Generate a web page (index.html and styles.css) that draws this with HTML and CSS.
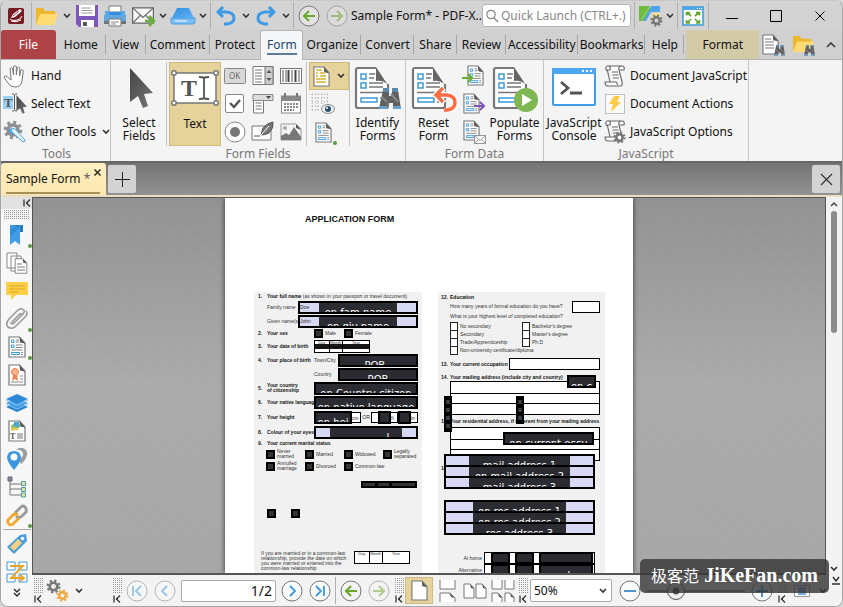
FILE: index.html
```html
<!DOCTYPE html>
<html lang="en">
<head>
<meta charset="utf-8">
<title>Sample Form* - PDF-XChange Editor</title>
<link rel="stylesheet" href="styles.css">
</head>
<body>
<svg class="defs" aria-hidden="true">
  <defs>
    <linearGradient id="gBlue" x1="0" y1="0" x2="1" y2="1"><stop offset="0" stop-color="#2e8ddd"/><stop offset="1" stop-color="#62b4fa"/></linearGradient>
    <linearGradient id="gArrow" x1="0" y1="0" x2="1" y2="1"><stop offset="0" stop-color="#444"/><stop offset="1" stop-color="#777"/></linearGradient>
    <symbol id="chev" viewBox="0 0 8 6"><path d="M1 1l3 3 3-3" fill="none" stroke="#333" stroke-width="1.6"/></symbol>
    <symbol id="dchev" viewBox="0 0 8 10"><path d="M1 1l3 3 3-3M1 5l3 3 3-3" fill="none" stroke="#333" stroke-width="1.5"/></symbol>
    <symbol id="first" viewBox="0 0 8 8"><path d="M1 0.500v7M7 0.500L3.500 4 7 7.500M3 4h2" fill="none" stroke="#333" stroke-width="1.300"/></symbol>
    <symbol id="doc" viewBox="0 0 18 22"><path d="M1 1h10.500l5.500 6v14H1z" fill="#fff" stroke="#777" stroke-width="1.200"/><path d="M11.500 1l5.500 6.500-5-1z" fill="#555"/></symbol>
    <symbol id="form" viewBox="0 0 18 22"><use href="#doc"/><path d="M3.500 4h2.500v2.500H3.500zM3.500 9h2.500v2.500H3.500zM3.500 16.500h8v2h-8z" fill="none" stroke="#3d9bdc"/><path d="M8 4h3M8 6h3M8 9h6.500M8 11.500h6.500M3.500 14h11M13 16.500h2M13 18.500h2" stroke="#777" stroke-width=".9"/></symbol>
    <symbol id="bigform" viewBox="0 0 36 44"><path d="M2 2h20l12 14v26H2z" fill="#fff"/><path d="M22 2H4Q2 2 2 4v36q0 2 2 2h28q2 0 2-2V18" fill="none" stroke="#777" stroke-width="2.200"/><path d="M22 1l12 18q-5-5-12-4z" fill="#666"/><path d="M7 8h5v5H7zM7 17h5v5H7zM7 32h16v4H7z" fill="#fff" stroke="#3d9bdc" stroke-width="1.500"/><path d="M15 8h6M15 12h5M15 17h14M15 21h14M6 26.500h23M26 32h4M26 36h4" stroke="#777" stroke-width="1.500"/></symbol>
    <symbol id="bino" viewBox="0 0 22 22"><path d="M4 2h6v6h3V2h6l3 19h-8v-6H8v6H0z" fill="#606060"/><path d="M4 0h6v4H4zM13 0h6v4h-6z" fill="#5b88aa"/><path d="M0 18h8v3H0zM14 18h8v3h-8z" fill="#66a0c9"/><path d="M3 9l5 5M12 6l7 8" stroke="#888" stroke-width="2"/></symbol>
    <symbol id="gear" viewBox="0 0 20 20"><circle cx="10" cy="10" r="7.800" fill="none" stroke="currentColor" stroke-width="3" stroke-dasharray="3.060 3.060"/><circle cx="10" cy="10" r="5" fill="none" stroke="currentColor" stroke-width="3.600"/></symbol>
    <symbol id="scroll" viewBox="0 0 22 22"><path d="M5 1h13q3 0 2 4h-5L18 17q1 4-2 4H4q-3 0-3-4h11q1 0 1.500 3M6 17L3.500 6Q1 5 2 2.500T5 1q2 1 1 4H3M15 5q-1-4 3-4M8 7h6M8.500 10h6M9 13h6" fill="#fafafa" stroke="#666" stroke-width="1.100"/></symbol>
    <symbol id="cursor" viewBox="0 0 24 40"><path d="M1 0L24 25l-9 1 4 12-5 2-5-12-8 6z" fill="url(#gArrow)"/></symbol>
    <symbol id="left" viewBox="0 0 22 22"><circle cx="11" cy="11" r="10" fill="#f4f4f4" fill-opacity=".5" stroke="#777"/><path d="M17 11H6M11 6l-5 5 5 5" fill="none" stroke="#69a62c" stroke-width="2"/></symbol>
    <symbol id="right" viewBox="0 0 22 22"><circle cx="11" cy="11" r="10" fill="#f4f4f4" fill-opacity=".5" stroke="#777"/><path d="M5 11h11M11 6l5 5-5 5" fill="none" stroke="#69a62c" stroke-width="2"/></symbol>
    <symbol id="undo" viewBox="0 0 20 20"><path d="M7 1L2 6l5 5M2 6h9q7 1 7 6t-7 6H8" fill="none" stroke="#3d9ae6" stroke-width="3"/></symbol>
    <symbol id="ring" viewBox="0 0 22 22"><circle cx="11" cy="11" r="10" fill="#fafafa" stroke="#777"/></symbol>
    <symbol id="env" viewBox="0 0 24 18"><path d="M1 1h22v16H1z" fill="#f6f6f6" stroke="#666" stroke-width="1.300"/><path d="M1 1l11 10L23 1M1 17l8-8M23 17l-8-8" fill="none" stroke="#666" stroke-width="1.200"/></symbol>
    <symbol id="folder" viewBox="0 0 24 20"><path d="M1 18V2h7l2 3h10v4" fill="#efb82c"/><path d="M1 19L5 8h18l-4 11z" fill="#ffdb73"/></symbol>
  </defs>
</svg>

<div class="window">
  <header class="titlebar">
    <span class="logo"><svg width="16" height="16" viewBox="0 0 16 16"><rect width="16" height="16" rx="2" fill="#761c22"/><path d="M2 11q3 3 10 0l2-3M3 13q5 2 10-1" stroke="#fff" fill="none"/><path d="M3 10l2-4 7-5 2 2-7 6z" fill="#fff"/><path d="M5 8l6-5" stroke="#761c22" stroke-width=".8"/></svg></span>
    <i class="sep"></i>
    <button class="tool" aria-label="Open"><svg width="24" height="20"><use href="#folder"/></svg></button>
    <button class="drop" aria-label="Open options"><svg width="8" height="6"><use href="#chev"/></svg></button>
    <button class="tool" aria-label="Save"><svg width="22" height="22" viewBox="0 0 22 22"><path d="M0 0h22v22H3l-3-3z" fill="#7e57bd"/><path d="M3 0h16v11H3zM5 15h13v7H5z" fill="#fff"/><path d="M5.500 3h9M5.500 5.500h11M5.500 8h11" stroke="#999"/><path d="M7 17h4v4H7z" fill="#555"/></svg></button>
    <button class="tool" aria-label="Print"><svg width="22" height="22" viewBox="0 0 22 22"><path d="M5 1h12v6H5z" fill="#fff" stroke="#777"/><path d="M4 7h14v6H4z" fill="#3190e0"/><path d="M1 6h4v4h12V6h4v11H1z" fill="#5aa8e8"/><path d="M0 10h22v7H0z" fill="#62a8df"/><path d="M0 16h22v3H0z" fill="#6e7479"/><path d="M5 14h12v7H5z" fill="#fff" stroke="#777"/><path d="M7 17h8M7 19h5" stroke="#888"/></svg></button>
    <button class="tool" aria-label="Send by e-mail"><svg width="25" height="22" viewBox="0 0 25 22"><svg y="2" width="24" height="17"><use href="#env"/></svg><path d="M14 16h8M18 11l5 5-5 5" fill="none" stroke="#6cae38" stroke-width="2.500"/></svg></button>
    <button class="drop" aria-label="E-mail options"><svg width="8" height="6"><use href="#chev"/></svg></button>
    <button class="tool" aria-label="Scan"><svg width="26" height="18" viewBox="0 0 26 18"><path d="M7 1h12l5 10H2z" fill="url(#gBlue)"/><path d="M1 11h24v4q0 2-2 2H3q-2 0-2-2z" fill="#7bbdf4" stroke="#4f9fd9"/><path d="M5 14h12" stroke="#fff"/></svg></button>
    <button class="drop" aria-label="Scan options"><svg width="8" height="6"><use href="#chev"/></svg></button>
    <i class="sep"></i>
    <button class="tool" aria-label="Undo"><svg width="20" height="20"><use href="#undo"/></svg></button>
    <button class="drop" aria-label="Undo history"><svg width="8" height="6"><use href="#chev"/></svg></button>
    <button class="tool" aria-label="Redo"><svg width="20" height="20" viewBox="0 0 20 20"><path d="M13 1l5 5-5 5M18 6H9q-7 1-7 6t7 6h3" fill="none" stroke="#3d9ae6" stroke-width="3"/></svg></button>
    <button class="drop" aria-label="Redo history"><svg width="8" height="6"><use href="#chev"/></svg></button>
    <i class="sep"></i>
    <button class="tool" aria-label="Previous view"><svg width="22" height="22"><use href="#left"/></svg></button>
    <button class="tool faded" aria-label="Next view"><svg width="22" height="22"><use href="#right"/></svg></button>
    <h1 class="title">Sample Form* - PDF-X..</h1>
    <label class="search"><svg width="14" height="14" viewBox="0 0 14 14"><circle cx="6" cy="5.500" r="4.200" fill="none" stroke="#888" stroke-width="1.200"/><path d="M9 9l4 4" stroke="#888" stroke-width="1.400"/></svg><input type="text" placeholder="Quick Launch (CTRL+.)" aria-label="Quick Launch"></label>
    <i class="sep"></i>
    <button class="tool" aria-label="UI options"><svg width="25" height="22" viewBox="0 0 25 22"><path d="M1 1h11v5L5 16H1z" fill="#6ebc40"/><path d="M13 1h9v6h-9l-5 9H5l7-12z" fill="#4fa6f0"/><path d="M15 8h7v5h-8z" fill="#ffe083"/><path d="M12 1L3 15" stroke="#a5d489"/><svg x="12" y="9" width="13" height="13" color="#777"><use href="#gear"/></svg></svg></button>
    <button class="drop" aria-label="UI options menu"><svg width="8" height="6"><use href="#chev"/></svg></button>
    <i class="sep"></i>
    <button class="tool" aria-label="Full screen"><svg width="22" height="20" viewBox="0 0 22 20"><rect x="1" y="1" width="20" height="18" fill="#fff" stroke="#3c97db" stroke-width="1.500"/><path d="M1 1h20v3H1z" fill="#4ba5e8"/><path d="M15 2.500h1M17 2.500h1M19 2.500h1" stroke="#fff"/><path d="M9 10L5 6.500M13 10l4-3.500M9 13l-4 4M13 13l4 4M4.500 9.500v-3H8M17.500 9.500v-3H14M4.500 14v3H8M17.500 14v3H14" fill="none" stroke="#63a82d" stroke-width="1.700"/></svg></button>
    <i class="sep"></i>
    <button class="winbtn" aria-label="Minimize"><svg width="12" height="12" viewBox="0 0 12 12"><path d="M0 8.500h12" stroke="#000"/></svg></button>
    <button class="winbtn" aria-label="Maximize"><svg width="12" height="12" viewBox="0 0 12 12"><path d="M.5.500h11v11H.5z" fill="none" stroke="#000"/></svg></button>
    <button class="winbtn" aria-label="Close"><svg width="10" height="10" viewBox="0 0 10 10"><path d="M.5.500l9 9M9.500.500l-9 9" stroke="#000"/></svg></button>
  </header>

  <nav class="tabs">
    <button class="tab file">File</button>
    <button class="tab">Home</button>
    <button class="tab">View</button>
    <button class="tab">Comment</button>
    <button class="tab last">Protect</button>
    <button class="tab active"><span>Form</span></button>
    <button class="tab">Organize</button>
    <button class="tab">Convert</button>
    <button class="tab">Share</button>
    <button class="tab">Review</button>
    <button class="tab">Accessibility</button>
    <button class="tab">Bookmarks</button>
    <button class="tab">Help</button>
    <button class="tab format">Format</button>
    <button class="tab last" aria-label="Find"><svg width="24" height="22" viewBox="0 0 24 22"><svg width="17" height="21"><use href="#doc"/></svg><path d="M3 5h6M3 8h9M3 11h9M3 14h9" stroke="#777"/><svg x="12" y="11" width="11" height="11"><use href="#bino"/></svg></svg></button>
    <button class="tab last" aria-label="Search"><svg width="24" height="22" viewBox="0 0 24 22"><svg width="23" height="19"><use href="#folder"/></svg><svg x="12" y="11" width="11" height="11"><use href="#bino"/></svg></svg></button>
    <button class="tab last" aria-label="Collapse ribbon"><svg width="10" height="6" viewBox="0 0 10 6"><path d="M1 5l4-4 4 4" fill="none" stroke="#333" stroke-width="1.500"/></svg></button>
  </nav>

  <section class="ribbon">
    <div class="group tools">
      <div class="items">
        <div class="list">
          <button class="row"><svg width="24" height="24" viewBox="0 0 24 24"><path d="M8 14L7 4.500q1.500-1.500 2.500 0L10.500 11V2.500q1.500-1.500 2.800 0V11l1-7.500q1.700-1 2.500.5L16.500 12l1.500-6q1.700-.8 2.300.8L19 17q-1 6-7 6-5 0-7-4l-4-6q1-2 3-.5L8 16z" fill="#fff" stroke="#777"/></svg>Hand</button>
          <button class="row"><svg width="24" height="22" viewBox="0 0 24 22"><path d="M0 3h10v13H0z" fill="#9bd0f5"/><text x="1" y="14" class="serif t13">T</text><path d="M9 1q2 0 2.500 1Q12 1 14 1M11.500 2v15M9 18q2 0 2.500-1 .5 1 2.500 1" fill="none" stroke="#555"/><svg x="13" y="2" width="11" height="19"><use href="#cursor"/></svg></svg>Select Text</button>
          <button class="row"><svg width="24" height="24" viewBox="0 0 24 24"><svg width="20" height="20" color="#8b9094"><use href="#gear"/></svg><path d="M8 8l4 1 10 11q0 2-2 2L9 12z" fill="#e8f4fc" stroke="#4ba3df"/><path d="M7 9q-1 3 3 4" fill="none" stroke="#4ba3df" stroke-width="2"/></svg>Other Tools<svg class="more" width="8" height="6"><use href="#chev"/></svg></button>
        </div>
      </div>
      <h2>Tools</h2>
    </div>

    <div class="group fields">
      <div class="items">
        <button class="big lead"><svg width="44" height="50" viewBox="0 0 44 50"><svg x="12" y="6" width="24" height="40"><use href="#cursor"/></svg></svg>Select<br>Fields</button>
        <i class="split"></i>
        <button class="big on"><svg width="48" height="50" viewBox="0 0 48 50"><path d="M3 10h42v30H3z" fill="#fff" stroke="#777" stroke-width="1.500"/><g fill="#fff" stroke="#777" stroke-width="1.500"><circle cx="3" cy="10" r="2.200"/><circle cx="45" cy="10" r="2.200"/><circle cx="3" cy="40" r="2.200"/><circle cx="45" cy="40" r="2.200"/></g><text x="10" y="33" class="serif t24">T</text><path d="M28 14q4 0 5 1 1-1 5-1M33 15v20M28 36q4 0 5-1 1 1 5 1" fill="none" stroke="#555" stroke-width="1.800"/></svg>Text</button>
        <div class="gallery">
          <button aria-label="Button"><svg width="22" height="22" viewBox="0 0 22 22"><rect x=".5" y="3.500" width="21" height="15" rx="1" fill="#d9d9d9" stroke="#888"/><text x="5" y="14" class="sans t8">OK</text></svg></button>
          <button aria-label="List box"><svg width="22" height="22" viewBox="0 0 22 22"><path d="M1 1.500h20v18H1z" fill="#fff" stroke="#777"/><path d="M13 1.500h8v18h-8z" fill="#ccc" stroke="#777"/><path d="M3 5h7M3 8h7M3 11h7M3 14h7M3 17h7" stroke="#777"/><path d="M14.500 8L17 5l2.500 3zM14.500 13l2.500 3 2.500-3z" fill="#555"/></svg></button>
          <button aria-label="Barcode"><svg width="22" height="22" viewBox="0 0 22 22"><rect x=".5" y="3.500" width="21" height="15" fill="#fff" stroke="#777"/><path d="M3 5v12M6 5v12M12 5v12M19 5v12" stroke="#555"/><path d="M8.500 5v12M15.500 5v12" stroke="#444" stroke-width="2"/></svg></button>
          <button aria-label="Check box"><svg width="22" height="22" viewBox="0 0 22 22"><rect x="1.500" y="1.500" width="18" height="18" rx="1.500" fill="#fff" stroke="#888"/><path d="M6 10l4 4 6-7" fill="none" stroke="#555" stroke-width="2.400"/></svg></button>
          <button aria-label="Drop-down"><svg width="22" height="22" viewBox="0 0 22 22"><path d="M1.500 6h10v14h-10z" fill="#fff" stroke="#777"/><path d="M1 1.500h20v6H1z" fill="#ddd" stroke="#888"/><path d="M14 3h5l-2.500 3z" fill="#444"/><path d="M3.500 10h6M3.500 13h6M3.500 16h6" stroke="#777"/></svg></button>
          <button aria-label="Date"><svg width="22" height="22" viewBox="0 0 22 22"><rect x="1.500" y="3" width="19" height="17" fill="#fff" stroke="#888"/><path d="M1 3h20v5H1z" fill="#888"/><path d="M5 0v4M17 0v4" stroke="#777" stroke-width="2"/><path d="M4 11h14M4 14h14M4 17h10" stroke="#888" stroke-width="2" stroke-dasharray="2 1"/></svg></button>
          <button aria-label="Radio button"><svg width="22" height="22" viewBox="0 0 22 22"><circle cx="11" cy="11" r="10" fill="#fff" stroke="#888"/><circle cx="11" cy="11" r="5" fill="#777"/></svg></button>
          <button aria-label="Signature"><svg width="24" height="22" viewBox="0 0 24 22"><path d="M1 5h19v14H1z" fill="#fff" stroke="#777"/><path d="M3 15h6" stroke="#555"/><path d="M10 14l2-7q4-5 10-6 1 6-4 11-4 2-8 2z" fill="#777" stroke="#555"/><path d="M10 14l8-9" stroke="#fff"/></svg></button>
          <button aria-label="Image"><svg width="22" height="22" viewBox="0 0 22 22"><path d="M1 3h15l5 5v11H1z" fill="#f5f5f5" stroke="#999"/><circle cx="5" cy="7" r="2" fill="#aaa"/><path d="M1 19v-4l5-3 3 2 5-8 7 10v3z" fill="#777"/><path d="M16 3l5 6-5-2z" fill="#555"/></svg></button>
        </div>
        <i class="split"></i>
        <div class="stack">
          <button class="on" aria-label="Highlight fields"><svg width="17" height="21" viewBox="0 0 17 21"><svg width="17" height="21"><use href="#doc"/></svg><path d="M3 4h6M3 7h2M7 7h5M3 10h2M7 10h6M3 13h10M3 16h10" stroke="#dab22b" stroke-width="1.500"/></svg><svg class="more" width="8" height="6"><use href="#chev"/></svg></button>
          <button aria-label="Show grid"><svg width="24" height="24" viewBox="0 0 24 24"><path d="M1 2h18M1 6h18M1 10h18M1 14h9M1 18h9" stroke="#999" stroke-dasharray="1 2"/><path d="M1 2v17M6 2v17M11 2v10M16 2v8" stroke="#aaa" stroke-dasharray="1 2"/><ellipse cx="17" cy="17" rx="6.500" ry="4.500" fill="#eee" stroke="#888"/><circle cx="17" cy="17" r="3" fill="#27506e"/><circle cx="16" cy="16" r="1" fill="#fff"/></svg></button>
          <button class="dot" aria-label="Form pane"><svg width="17" height="21"><use href="#form"/></svg></button>
        </div>
        <i class="split"></i>
        <button class="big wide"><svg width="48" height="50" viewBox="0 0 48 50"><svg x="0" y="4" width="36" height="44"><use href="#bigform"/></svg><svg x="25" y="26" width="22" height="22"><use href="#bino"/></svg></svg>Identify<br>Forms</button>
      </div>
      <h2>Form Fields</h2>
    </div>

    <div class="group data">
      <div class="items">
        <button class="big wide"><svg width="48" height="50" viewBox="0 0 48 50"><svg x="1" y="4" width="36" height="44"><use href="#bigform"/></svg><path d="M34 26l-8 7 8 8M27 33h10q8 1 8 8t-8 8h-3" fill="none" stroke="#fff" stroke-width="6"/><path d="M33 26l-7 7 7 7M27 33h10q8 1 8 7.500T37 48h-3" fill="none" stroke="#ff6b43" stroke-width="3.500"/></svg>Reset<br>Form</button>
        <div class="stack slim">
          <button aria-label="Import data"><svg width="24" height="22" viewBox="0 0 24 22"><svg x="5" width="17" height="21"><use href="#form"/></svg><path d="M0 13h9M6 9l4 4-4 4" fill="none" stroke="#6bad31" stroke-width="2"/></svg></button>
          <button aria-label="Export data"><svg width="24" height="22" viewBox="0 0 24 22"><svg x="1" width="17" height="21"><use href="#form"/></svg><path d="M12 13h9M18 9l4 4-4 4" fill="none" stroke="#7c55bd" stroke-width="2"/></svg></button>
          <button aria-label="Mail data"><svg width="24" height="24" viewBox="0 0 24 24"><svg x="1" width="17" height="21"><use href="#form"/></svg><svg x="12" y="15" width="12" height="9"><use href="#env"/></svg></svg></button>
        </div>
        <button class="big wide"><svg width="48" height="50" viewBox="0 0 48 50"><svg x="1" y="4" width="36" height="44"><use href="#bigform"/></svg><circle cx="35" cy="38" r="12" fill="#7fb752"/><path d="M31 32v12l10-6z" fill="#fff"/></svg>Populate<br>Forms</button>
      </div>
      <h2>Form Data</h2>
    </div>

    <div class="group script">
      <div class="items">
        <button class="big console"><svg width="48" height="50" viewBox="0 0 48 50"><rect x="3" y="7" width="42" height="36" rx="1" fill="#fff" stroke="#3f9ce8" stroke-width="2"/><path d="M2 6h44v6H2z" fill="#4ca7f0"/><path d="M32 9h2M36 9h2M40 9h2" stroke="#fff" stroke-width="2"/><path d="M11 20l7 6-7 6M20 31h12" fill="none" stroke="#555" stroke-width="2.800"/></svg>JavaScript<br>Console</button>
        <div class="list">
          <button class="row"><svg width="22" height="22"><use href="#scroll"/></svg>Document JavaScript</button>
          <button class="row"><svg width="22" height="22" viewBox="0 0 22 22"><path d="M1.500 1.500h19v19h-19z" fill="#f9f9f9" stroke="#888" stroke-dasharray="1 1"/><path d="M10 3h6l-3 6h4L7 19l2-8H5z" fill="#ffcb45"/></svg>Document Actions</button>
          <button class="row"><svg width="22" height="24" viewBox="0 0 22 24"><use href="#scroll" height="22"/><svg x="9" y="11" width="13" height="13" color="#777"><use href="#gear"/></svg></svg>JavaScript Options</button>
        </div>
      </div>
      <h2>JavaScript</h2>
    </div>
  </section>

  <div class="doctabs">
    <div class="doctab"><span>Sample Form <em>*</em></span><button aria-label="Close tab"><svg width="7" height="7" viewBox="0 0 7 7"><path d="M.5.500l6 6M6.500.500l-6 6" stroke="#222" stroke-width="1.400"/></svg></button></div>
    <button class="square" aria-label="New tab"><svg width="15" height="15" viewBox="0 0 15 15"><path d="M7.500 0v15M0 7.500h15" stroke="#222"/></svg></button>
    <button class="square end" aria-label="Close document"><svg width="13" height="13" viewBox="0 0 13 13"><path d="M1 1l11 11M12 1L1 12" stroke="#333" stroke-width="1.200"/></svg></button>
  </div>

  <div class="main">
    <aside class="side">
      <button class="collapse" aria-label="Collapse panes"><svg width="8" height="8"><use href="#first"/></svg></button>
      <i class="dots"></i>
      <button class="pane dot" aria-label="Bookmarks"><svg width="16" height="22" viewBox="0 0 16 22"><path d="M1 1h10v20l-5-4-5 4z" fill="#409ee9"/><path d="M3 1h11v7h-3V3z" fill="#2678bd"/><path d="M1 5l9-4h3L1 13z" fill="#318bd5"/></svg></button>
      <button class="pane" aria-label="Thumbnails"><svg width="22" height="22" viewBox="0 0 22 22"><path d="M1 1h10v15H1zM5 4h10v15H5z" fill="#fff" stroke="#888"/><svg x="8" y="6" width="14" height="16"><use href="#doc"/></svg><path d="M11 12h5M11 15h8M11 18h8" stroke="#777"/></svg></button>
      <button class="pane" aria-label="Comments"><svg width="22" height="20" viewBox="0 0 22 20"><path d="M0 1h22v13H10l-5 5v-5H0z" fill="#ffcf47"/><path d="M3 5h16M3 8h16M3 11h10" stroke="#d8a421"/></svg></button>
      <button class="pane dot" aria-label="Attachments"><svg width="22" height="22" viewBox="0 0 22 22"><path d="M7 16L17 6q3-4-1-5-2-1-5 2L3 11q-4 5-1 8 4 3 8-1L20 8q2-3 0-5M6 14l8-8q2-1 2 1l-8 8q-3 2-3-1" fill="none" stroke="#999" stroke-width="1.600"/></svg></button>
      <button class="pane dot" aria-label="Fields"><svg width="18" height="22"><use href="#form"/></svg></button>
      <button class="pane" aria-label="Signatures"><svg width="18" height="22" viewBox="0 0 18 22"><use href="#doc"/><circle cx="7" cy="8" r="3.500" fill="#ffb28c" stroke="#ef8351"/><path d="M5 11l-1 6 3-2 3 2-1-6" fill="#ef8351"/><path d="M12 12h3M12 15h3M3 18h12" stroke="#888"/></svg></button>
      <button class="pane" aria-label="Layers"><svg width="22" height="20" viewBox="0 0 22 20"><path d="M0 14l11-5 11 5-11 5z" fill="#2a85cd"/><path d="M0 10l11-5 11 5-11 5z" fill="#4aa1e8"/><path d="M0 6l11-5 11 5-11 5z" fill="#2b89d8"/><path d="M0 7l11 5 11-5M0 11l11 5 11-5" fill="none" stroke="#85c3f5"/></svg></button>
      <button class="pane" aria-label="Content"><svg width="18" height="22" viewBox="0 0 18 22"><use href="#doc"/><path d="M3 6l4-4 6 3-2 3-7 3z" fill="#8abf68"/><path d="M6 2h5v5H6z" fill="#4fa4dc"/><path d="M3 8l5-1 3 3H3z" fill="#e1c545"/><text x="2" y="19" class="serif t8">T</text><path d="M9 14h6M9 16h6M9 18h6" stroke="#777"/></svg></button>
      <button class="pane" aria-label="Destinations"><svg width="22" height="24" viewBox="0 0 22 24"><path d="M10 3q3-3 7-2 5 2 4 7-1 5-6 9l-2-4q5-4 4-7-2-4-7-3z" fill="#9a9ea2"/><path d="M8 23Q1 15 1 10 2 4 8 4t7 6q0 5-7 13z" fill="#3b97df"/><circle cx="8" cy="10" r="3.500" fill="#fff"/></svg></button>
      <button class="pane" aria-label="Structure"><svg width="20" height="22" viewBox="0 0 20 22"><path d="M3 4v15h12M3 8h11M3 13h11" fill="none" stroke="#777"/><path d="M1 1h4v4H1z" fill="#8888a3" stroke="#667"/><path d="M14.500 5.500h4v4h-4zM14.500 11.500h4v4h-4zM14.500 17h4v4h-4z" fill="#d8e8a8" stroke="#559ba0"/></svg></button>
      <button class="pane dot" aria-label="Links"><svg width="22" height="22" viewBox="0 0 22 22"><path d="M9 9l6-6q2-2 4 0t1 5l-4 4q-3 3-6 0" fill="none" stroke="#999" stroke-width="2.800"/><path d="M12 11q-3-2-5 0l-5 5q-1 2 1 4t4 0l6-6" fill="none" stroke="#f0a72e" stroke-width="2.800"/></svg></button>
      <i class="rule"></i>
      <button class="pane" aria-label="Tags"><svg width="22" height="22" viewBox="0 0 22 22"><path d="M14 2l6-1 1 7L8 21l-7-7z" fill="#499eda"/><path d="M12 6l4 4-8 8-4-4z" fill="#f7cf82"/><circle cx="16.500" cy="5.500" r="1.800" fill="#fff"/></svg></button>
      <button class="pane" aria-label="Reading order"><svg width="22" height="22" viewBox="0 0 22 22"><path d="M1 1h8v8H1zM13 1h8v8h-8zM1 13h8v8H1zM13 13h8v8h-8z" fill="#fff" stroke="#4599cf"/><path d="M4 5h13L5 17h13M14 14l4 3-4 3" fill="none" stroke="#e8a326" stroke-width="1.800"/></svg></button>
      <button class="overflow" aria-label="More panes"><svg width="8" height="10"><use href="#dchev"/></svg></button>
    </aside>

    <div class="content">
      <div class="view">
        <div class="workspace">
          <article class="page">
            <h3>APPLICATION FORM</h3>
            <div class="columns">
              <section class="col left">
                <div class="q h8"><b>1.</b><p><b>Your full name</b> (as shown in your passport or travel document)</p></div>
                <label class="q"><span></span><span class="name">Family name</span><span class="field"><input value="Doe"><span class="tag w78">on fam name</span></span></label>
                <label class="q"><span></span><span class="name">Given name(s)</span><span class="field"><input value="John"><span class="tag w78">on giv name</span></span></label>
                <div class="q h11"><b>2.</b><b class="lab">Your sex</b><label class="opt"><input type="checkbox" class="blk">Male</label><label class="opt"><input type="checkbox" class="blk">Female</label></div>
                <div class="q"><b>3.</b><b class="lab">Your date of birth</b><span class="date filled"><i>Day</i><i>Month</i><i>Year</i></span></div>
                <div class="q"><b>4.</b><b class="lab">Your place of birth</b><span class="sub">Town/City</span><span class="field"><span class="tag">POB ,</span></span></div>
                <div class="q"><b></b><b class="lab"></b><span class="sub">Country</span><span class="field"><span class="tag">POB</span></span></div>
                <div class="q"><b>5.</b><b class="lab">Your country<br>of citizenship</b><span class="field"><span class="tag">on Country citizen</span></span></div>
                <div class="q h15"><b>6.</b><b class="lab">Your native language</b><span class="field"><span class="tag">on native language</span></span></div>
                <div class="q h15"><b>7.</b><b class="lab">Your height</b><span class="field height"><span class="tag">on hei</span></span><span class="unit">cm</span><span class="or">OR</span><span class="unit gap"></span><span class="field tiny"><span class="tag"></span></span><span class="unit">ft</span><span class="field tiny"><span class="tag"></span></span><span class="unit">in</span></div>
                <div class="q"><b>8.</b><b class="lab">Colour of your eyes</b><span class="field"><input value="" aria-label="Colour of your eyes"><span class="tag w72">l</span><i class="pad"></i></span></div>
                <div class="q h9"><b>9.</b><b>Your current marital status</b></div>
                <div class="opts">
                  <label><input type="checkbox" class="blk"><span>Never<br>married</span></label><label><input type="checkbox" class="blk">Married</label><label><input type="checkbox" class="blk">Widowed</label><label><input type="checkbox" class="blk"><span>Legally<br>separated</span></label>
                  <label><input type="checkbox" class="blk"><span>Annulled<br>marriage</span></label><label><input type="checkbox" class="blk">Divorced</label><label><input type="checkbox" class="blk">Common-law</label>
                </div>
                <div class="strip"><i></i><i></i><i></i></div>
                <div class="pair"><input type="checkbox" class="blk" aria-label="Yes"><input type="checkbox" class="blk" aria-label="No"></div>
                <div class="note"><p>If you are married or in a common-law<br>relationship, provide the date on which<br>you were married or entered into the<br>common-law relationship</p><span class="date"><i>Day</i><i>Month</i><i>Year</i></span></div>
              </section>

              <section class="col right">
                <div class="q h9"><b>12.</b><b>Education</b></div>
                <label class="q h9"><span></span><span class="grow">How many years of formal education do you have?</span><input class="plain years"></label>
                <div class="q h11"><span></span>What is your highest level of completed education?</div>
                <div class="levels">
                  <label><input type="checkbox">No secondary</label><label><input type="checkbox">Bachelor's degree</label>
                  <label><input type="checkbox">Secondary</label><label><input type="checkbox">Master's degree</label>
                  <label><input type="checkbox">Trade/Apprenticeship</label><label><input type="checkbox">Ph.D</label>
                  <label><input type="checkbox">Non-university certificate/diploma</label>
                </div>
                <label class="q h18"><b>13.</b><b class="occ">Your current occupation</b><input class="plain"></label>
                <div class="q h8"><b>14.</b><b>Your mailing address (include city and country)</b></div>
                <div class="lines"><i></i><i></i><i></i></div>
                <div class="q h12"><b>15.</b><b>Your residential address, if different from your mailing address</b></div>
                <div class="lines"><i></i><i></i><i></i></div>
                <div class="q h15"><b>16.</b><b class="grow">Your telephone numbers</b><span class="num">number</span></div>
                <div class="phones">
                  <span>At home</span><div class="cells"><span class="tag"></span><span class="tag"></span><span class="tag">,</span></div>
                  <span>Alternative</span><div class="cells"><span class="tag">on</span><span class="tag">on</span><span class="tag">on phon</span></div>
                </div>
                <span class="float country"><span class="tag">on c</span></span>
                <span class="float boxes b4"><i></i><i></i><i></i><i></i></span>
                <span class="float boxes b3"><i></i><i></i><i></i></span>
                <span class="float current"><span class="tag">on current occu</span></span>
                <div class="float mail"><div class="field"><i class="pad"></i><span class="tag">mail address 1</span><i class="pad"></i></div><div class="field"><i class="pad"></i><span class="tag">on mail address 2</span><i class="pad"></i></div><div class="field"><i class="pad"></i><span class="tag">mail address 3</span><i class="pad"></i></div></div>
                <div class="float res"><div class="field"><i class="pad"></i><span class="tag">on res address 1</span><i class="pad"></i></div><div class="field"><i class="pad"></i><span class="tag">on res address 2</span><i class="pad"></i></div><div class="field"><i class="pad"></i><span class="tag">res address 3</span><i class="pad"></i></div></div>
              </section>
            </div>
          </article>
        </div>
        <div class="scroll">
          <svg width="8" height="6" viewBox="0 0 8 6"><path d="M1 5l3-3 3 3" fill="none" stroke="#444" stroke-width="1.500"/></svg>
          <i class="thumb"></i>
          <svg width="8" height="6"><use href="#chev"/></svg>
        </div>
      </div>

      <footer class="status">
        <span class="grip"><i class="dots"></i><svg width="8" height="8"><use href="#first"/></svg></span>
        <button class="st" aria-label="Options"><svg width="24" height="24" viewBox="0 0 24 24"><svg width="15" height="15" color="#777"><use href="#gear"/></svg><svg x="10" y="10" width="13" height="13" color="#eaaa3f"><use href="#gear"/></svg></svg></button>
        <button class="st thin" aria-label="More options"><svg width="8" height="6"><use href="#chev"/></svg></button>
        <span class="grip far"><i class="dots"></i><svg width="8" height="8"><use href="#first"/></svg></span>
        <button class="st faded" aria-label="First page"><svg width="22" height="22" viewBox="0 0 22 22"><use href="#ring"/><path d="M7 6v10M15 6l-5 5 5 5" fill="none" stroke="#3a98dc" stroke-width="1.800"/></svg></button>
        <button class="st faded" aria-label="Previous page"><svg width="22" height="22" viewBox="0 0 22 22"><use href="#ring"/><path d="M13 6l-5 5 5 5" fill="none" stroke="#3a98dc" stroke-width="1.800"/></svg></button>
        <input class="pageno" value="1/2" aria-label="Page">
        <button class="st" aria-label="Next page"><svg width="22" height="22" viewBox="0 0 22 22"><use href="#ring"/><path d="M9 6l5 5-5 5" fill="none" stroke="#3a98dc" stroke-width="1.800"/></svg></button>
        <button class="st" aria-label="Last page"><svg width="22" height="22" viewBox="0 0 22 22"><use href="#ring"/><path d="M7 6l5 5-5 5M15 6v10" fill="none" stroke="#3a98dc" stroke-width="1.800"/></svg></button>
        <i class="sep"></i>
        <button class="st" aria-label="Back"><svg width="22" height="22"><use href="#left"/></svg></button>
        <button class="st faded" aria-label="Forward"><svg width="22" height="22"><use href="#right"/></svg></button>
        <span class="grip"><i class="dots"></i><svg width="8" height="8"><use href="#first"/></svg></span>
        <button class="st on" aria-label="Single page"><svg width="17" height="21"><use href="#doc"/></svg></button>
        <button class="st" aria-label="Continuous"><svg width="17" height="22" viewBox="0 0 17 22"><path d="M1 0v9h15V0M1 22v-9h10l5 5v4" fill="#fff" stroke="#777"/><path d="M10 13l6 5-4-1z" fill="#555"/></svg></button>
        <button class="st" aria-label="Two pages"><svg width="24" height="22" viewBox="0 0 24 22"><path d="M1 4h6l4 4v10H1zM13 4h6l4 4v10H13z" fill="#fff" stroke="#777"/><path d="M7 4l4 5-3-1zM19 4l4 5-3-1z" fill="#555"/></svg></button>
        <button class="st" aria-label="Two pages continuous"><svg width="24" height="22" viewBox="0 0 24 22"><path d="M1 0v9h10V0M14 0v9h9V0M1 22v-9h6l4 4v5M14 22v-9h5l4 4v5" fill="#fff" stroke="#777"/><path d="M7 13l4 5-3-1zM19 13l4 5-3-1z" fill="#555"/></svg></button>
        <span class="grip"><i class="dots"></i><svg width="8" height="8"><use href="#first"/></svg></span>
        <label class="zoom"><select aria-label="Zoom"><option>50%</option></select><svg width="8" height="6"><use href="#chev"/></svg></label>
        <button class="st" aria-label="Zoom out"><svg width="22" height="22" viewBox="0 0 22 22"><use href="#ring"/><path d="M5 11h12" stroke="#3a88c8" stroke-width="1.800"/></svg></button>
        <input type="range" class="slider" min="0" max="100" value="25" aria-label="Zoom level">
        <button class="st" aria-label="Zoom in"><svg width="22" height="22" viewBox="0 0 22 22"><use href="#ring"/><path d="M5 11h12M11 5v12" stroke="#3a88c8" stroke-width="1.800"/></svg></button>
        <span class="grip"><i class="dots"></i><svg width="8" height="8"><use href="#first"/></svg></span>
        <button class="st" aria-label="Fit"><svg width="16" height="12" viewBox="0 0 16 12"><path d="M.5.500h15v11H.5z" fill="#fff" stroke="#999"/><path d="M4 2h8v8H4z" fill="#75ade0"/></svg></button>
        <button class="st thin" aria-label="Fit options"><svg width="8" height="6"><use href="#chev"/></svg></button>
        <button class="st slimmer" aria-label="More"><svg width="8" height="10" viewBox="0 0 8 10"><path d="M1 1l3 4 3-4M0 8h8" fill="none" stroke="#333" stroke-width="1.500"/></svg></button>
      </footer>
    </div>
  </div>
  <div class="mark"><span>极客范</span> JiKeFan.com</div>
</div>
</body>
</html>
```
FILE: styles.css
```css
* { box-sizing: border-box; }
body { margin: 0; background: #d8d8d8; color: #111; font: 12px/16px "Noto Sans", "Noto Sans CJK SC", sans-serif; }
button, input, select { margin: 0; padding: 0; border: 0; background: none; color: inherit; font: inherit; }
h1, h2, h3, p { margin: 0; font-size: inherit; font-weight: 400; }
i, em { font-style: normal; }
svg { display: block; flex: none; }
.defs { position: absolute; width: 0; height: 0; }
.serif { font-family: "Liberation Serif", serif; font-weight: 700; fill: #555; }
.sans { font-family: "Noto Sans", sans-serif; fill: #666; }
.t8 { font-size: 8px; }
.t13 { font-size: 13px; }
.t24 { font-size: 24px; }

.window { position: relative; display: flex; flex-direction: column; height: 100vh; overflow: hidden; border: 1px solid #a5a5a5; border-top-color: #c8c8c8; border-radius: 8px; background: #f4f4f4; }

/* title bar */
.titlebar { display: flex; align-items: center; height: 29px; flex: none; background: #d3d3d3; }
.logo { display: flex; justify-content: center; width: 29px; }
.sep { flex: none; width: 1px; height: 27px; margin: 0 1px; background: #b0b0b0; }
.tool, .drop, .winbtn { display: flex; flex: none; align-items: center; justify-content: center; height: 28px; }
.tool { width: 28px; }
.drop { width: 12px; }
.winbtn { width: 44px; }
.faded { opacity: .5; }
.title { flex: 1; min-width: 0; white-space: nowrap; }
.search { display: flex; align-items: center; gap: 2px; width: 149px; height: 23px; margin-right: 2px; padding-left: 2px; border: 1px solid #b5b5b5; border-radius: 3px; background: #fff; }
.search input { width: 100%; min-width: 0; outline: 0; }
.search input::placeholder { color: #888; opacity: 1; }

/* ribbon tabs */
.tabs { display: grid; grid-template-columns: 55fr 50fr 40fr 64fr 51fr 43fr 58fr 53fr 43fr 49fr 72fr 68fr 39fr 75fr 30fr 30fr 23fr; flex: none; height: 30px; background: #d0d0d0; border-bottom: 1px solid #b5b5b5; }
.tab { position: relative; display: flex; align-items: center; justify-content: center; min-width: 0; white-space: nowrap; }
.tab::after { content: ""; position: absolute; right: 0; top: 5px; bottom: 5px; width: 1px; background: #a5a5a5; }
.tab.file { background: #ad4347; color: #fff; border-radius: 3px 3px 0 0; }
.tab.file::after, .tab.last::after, .tab.active::after, .tab.format::after { display: none; }
.tab.active { margin-bottom: -1px; background: #f6f7f8; border: 1px solid #b5b5b5; border-bottom: 0; border-radius: 3px 3px 0 0; color: #20466c; }
.tab.active span { border-bottom: 2px solid #5b7d9b; }
.tab.format { margin-left: 2px; background: #d3cba8; }

/* ribbon */
.ribbon { display: flex; flex: none; height: 103px; background: #f4f4f4; border-bottom: 2px solid #666; }
.group { display: flex; flex-direction: column; flex: none; border-right: 1px solid #c5c5c5; }
.group h2 { color: #777; text-align: center; line-height: 15px; }
.items { display: flex; height: 86px; padding-top: 2px; }
.tools { width: 110px; padding-left: 2px; }
.fields { width: 295px; }
.fields .items { padding-left: 5px; }
.data { width: 138px; }
.script { width: 205px; }
.row { display: flex; align-items: center; gap: 4px; height: 28px; white-space: nowrap; }
.more { margin-left: 2px; }
.big { display: flex; flex-direction: column; align-items: center; flex: none; width: 46px; height: 84px; line-height: 13px; text-align: center; white-space: nowrap; }
.big svg { margin-bottom: 4px; }
.big.on { width: 52px; }
.lead { margin-right: 3px; }
.on { background: #e6d39b; border: 1px solid #cdbb80; }
.wide { width: 55px; }
.console { width: 60px; }
.split { flex: none; width: 1px; height: 84px; margin: 0 2px 0 1px; background: #c2c2c2; }
.split:nth-last-child(2) { margin: 0; }
.gallery { display: grid; grid-template-columns: repeat(3, 28px); }
.gallery button, .stack button { display: flex; align-items: center; justify-content: center; height: 28px; }
.stack { display: flex; flex-direction: column; width: 40px; }
.stack button { width: 28px; }
.stack .on { width: 40px; gap: 5px; }
.stack.slim, .slim button { width: 26px; }
.dot { position: relative; }
.dot::after { content: ""; position: absolute; right: 0; bottom: 1px; width: 4px; height: 4px; border-radius: 50%; background: #5b9a42; }

/* document tabs */
.doctabs { display: flex; flex: none; align-items: center; gap: 2px; height: 34px; background: linear-gradient(#747474, #929292); border-bottom: 2px solid #e8dfbd; }
.doctab { position: relative; align-self: stretch; width: 105px; padding: 0 6px 0 5px; background: linear-gradient(#ffefbf, #fce7b0); border-radius: 3px 3px 0 0; }
.doctab span { display: block; padding: 8px 0 5px; border-bottom: 2px solid #a69257; white-space: nowrap; }
.doctab em { color: #5a5a5a; }
.doctab button { position: absolute; right: 5px; top: 6px; }
.square { display: flex; align-items: center; justify-content: center; width: 28px; height: 28px; border-radius: 2px; background: #d3d3d3; }
.end { margin: 0 2px 0 auto; }

/* panes */
.main { display: flex; flex: 1; min-height: 0; }
.side { display: flex; flex-direction: column; flex: none; align-items: center; width: 31px; background: #f7f7f7; }
.collapse { display: flex; align-items: center; justify-content: flex-end; align-self: stretch; height: 12px; padding-right: 1px; background: #e2e2e2; }
.dots { flex: none; background: linear-gradient(90deg, transparent 1px, #f5f5f5 1px) 0 0 / 2px 2px, linear-gradient(#999 1px, #f5f5f5 1px) 0 0 / 2px 2px; }
.side .dots { width: 26px; height: 10px; margin: 1px 0; }
.pane { display: flex; flex: none; align-items: center; justify-content: center; width: 30px; height: 28px; }
.rule { width: 28px; height: 1px; background: #aaa; }
.overflow { padding-top: 2px; }
.content { display: flex; flex: 1; flex-direction: column; min-width: 0; }
.view { display: flex; flex: 1; min-height: 0; }
.workspace { display: flex; flex: 1; justify-content: center; min-width: 0; overflow: hidden; border: solid #555; border-width: 1px 1px 2px; background: repeating-linear-gradient(45deg, rgba(0, 0, 0, .03) 0 1px, transparent 1px 3px), linear-gradient(#949494, #adadad 50%, #a9a9a9); }
.scroll { display: flex; flex: none; flex-direction: column; align-items: center; width: 16px; padding: 4px 0 3px; background: #f3f3f3; }
.thumb { width: 6px; height: 33%; margin: 4px 0 auto; border-radius: 3px; background: #8b8b8b; }

/* PDF page */
.page { flex: none; width: 408px; background: #fff; box-shadow: 0 0 5px #333; color: #333; font: 5px/5px "Liberation Sans", sans-serif; white-space: nowrap; }
.page h3 { height: 94px; padding: 16px 0 0 80px; color: #111; font-size: 9px; font-weight: 700; line-height: 10px; }
.page b { color: #111; }
.columns { display: flex; gap: 16px; padding-left: 29px; }
.col { position: relative; height: 500px; background: #f1f1f1; }
.left { width: 168px; padding: 0 4px; }
.right { width: 167px; padding: 1px 5px 0 3px; }
.q { display: flex; align-items: center; height: 14px; }
.q > :first-child { flex: none; width: 9px; }
.h8 { height: 8px; }
.h9 { height: 9px; }
.h11 { height: 11px; }
.h12 { height: 12px; }
.h15 { height: 15px; }
.h18 { height: 18px; }
.name { width: 31px; flex: none; }
.lab { width: 47px; flex: none; }
.sub { width: 24px; flex: none; }
.opt { display: flex; align-items: center; gap: 2px; width: 30px; }
.field { position: relative; display: flex; flex: 1; min-width: 0; height: 13px; border: 2px solid #000; background: #d7d8f2; }
.field input { flex: 1; min-width: 0; height: 9px; }
.tag { display: block; flex: 1; min-width: 0; padding-top: 4px; overflow: hidden; background: #2b2c32; color: #fff; font: 10px/12px "DejaVu Sans", sans-serif; text-align: center; }
.w78 { flex: none; width: 78px; margin-right: 19px; }
.w72 { flex: none; width: 72px; padding-left: 44px; }
.pad { flex: none; width: 14px; }
.height { flex: none; width: 38px; }
.tiny { flex: none; width: 13px; }
.unit { flex: none; width: 7px; height: 11px; padding-top: 3px; overflow: hidden; border: solid #000; border-width: 1px 1px 1px 0; background: #fff; }
.height + .unit { width: 9px; }
.unit.gap { border-width: 1px 0 1px 1px; }
.or { flex: 1; text-align: center; }
input[type="checkbox"] { appearance: none; flex: none; width: 8px; height: 8px; border: 1px solid #222; background: #fff; }
input.blk { width: 9px; height: 9px; border: 2px solid #000; background: #333438; }
.date { display: grid; grid-template-columns: 1fr 1fr 2fr; width: 56px; height: 13px; border: 1px solid #000; background: #fff; font-size: 4px; line-height: 4px; text-align: center; }
.date i + i { border-left: 1px solid #000; }
.filled { background: linear-gradient(#fff 0 3px, #151515 3px 8px, #fff 8px); }
.opts { display: grid; grid-template-columns: repeat(4, 39px); grid-auto-rows: 12px; padding-left: 8px; }
.opts label { display: flex; align-items: center; gap: 2px; }
.strip { display: flex; gap: 3px; width: 56px; height: 7px; margin: 9px 0 0 103px; padding: 2px; background: #000; }
.strip i { flex: 1; background: #333; }
.strip i:last-child { flex: 2; }
.pair { display: flex; gap: 15px; margin: 21px 0 0 9px; }
.note { display: flex; justify-content: space-between; margin: 33px 8px 0 3px; }

.grow { flex: 1; }
.plain { flex: 1; min-width: 0; height: 12px; border: 1px solid #000; background: #fff; }
.years { flex: none; width: 28px; }
.levels { display: grid; grid-template-columns: 72px 1fr; grid-auto-rows: 8px; padding: 0 0 1px 9px; }
.levels label { display: flex; align-items: center; gap: 2px; }
.levels input[type="checkbox"] { height: 9px; }
.occ { width: 59px; flex: none; }
.lines { display: grid; grid-template-rows: repeat(3, 1fr); height: 34px; margin-left: 9px; border: 1px solid #000; background: #fff; }
.lines i + i { border-top: 1px solid #000; }
.num { padding-right: 12px; color: #334; }
.phones { display: grid; grid-template-columns: 38px 1fr; grid-auto-rows: 12px; align-items: center; margin: 76px 5px 0 3px; text-align: right; }
.cells { display: grid; grid-template-columns: 19px 19px 54px; justify-content: space-between; height: 12px; margin-left: 2px; padding: 0 1px 0 6px; border: 1px solid #000; background: #fff; }
.cells .tag { border: solid #000; border-width: 1px 2px; }
.float { position: absolute; border: 2px solid #000; }
.country { left: 129px; top: 83px; width: 29px; height: 13px; display: flex; }
.current { left: 65px; top: 140px; width: 91px; height: 13px; display: flex; }
.boxes { display: flex; flex-direction: column; gap: 4px; padding: 2px 0; width: 8px; background: #000; }
.boxes i { height: 4px; background: #3b3c40; }
.b4 { left: 6px; top: 104px; }
.b3 { left: 78px; top: 104px; }
.mail, .res { left: 6px; width: 151px; border-width: 1px 0; }
.mail { top: 162px; }
.res { top: 208px; }
.float .field { height: 11px; border-width: 1px 2px; }
.mail .pad { width: 23px; }
.res .pad { width: 27px; }

/* status bar */
.status { display: flex; flex: none; align-items: center; height: 31px; background: #f3f3f3; }
.grip { display: flex; flex: none; flex-direction: column; gap: 2px; align-items: center; width: 12px; }
.grip .dots { width: 9px; height: 15px; }
.far { margin-left: 25px; }
.st { display: flex; flex: none; align-items: center; justify-content: center; width: 28px; height: 27px; }
.thin { width: 14px; }
.slimmer { width: 12px; align-self: flex-start; height: 12px; }
.pageno { width: 95px; height: 22px; margin: 0 2px; padding: 0 3px; border: 1px solid #aaa; border-radius: 2px; background: #fff; font-size: 14px; text-align: right; }
.zoom { display: flex; align-items: center; flex: none; width: 82px; height: 23px; margin: 0 4px 0 1px; padding: 0 4px 0 3px; border: 1px solid #aaa; border-radius: 2px; background: #fff; }
.zoom select { flex: 1; min-width: 0; appearance: none; }
.slider { flex: 1; min-width: 0; height: 20px; margin: 0 3px; appearance: none; background: linear-gradient(#888, #888) center / 100% 2px no-repeat; }
.slider::-webkit-slider-thumb { appearance: none; width: 18px; height: 18px; border: 1px solid #555; border-radius: 50%; background: radial-gradient(circle, #555 0 3px, #eee 4px); }

.mark { position: absolute; right: 13px; bottom: 13px; padding: 0 11px; border-radius: 5px; background: rgba(55, 55, 55, .82); color: #fff; font: 700 20px/32px "Liberation Serif", "Noto Sans CJK SC", serif; white-space: nowrap; }
.mark span { font-size: 16px; font-weight: 400; }
```
